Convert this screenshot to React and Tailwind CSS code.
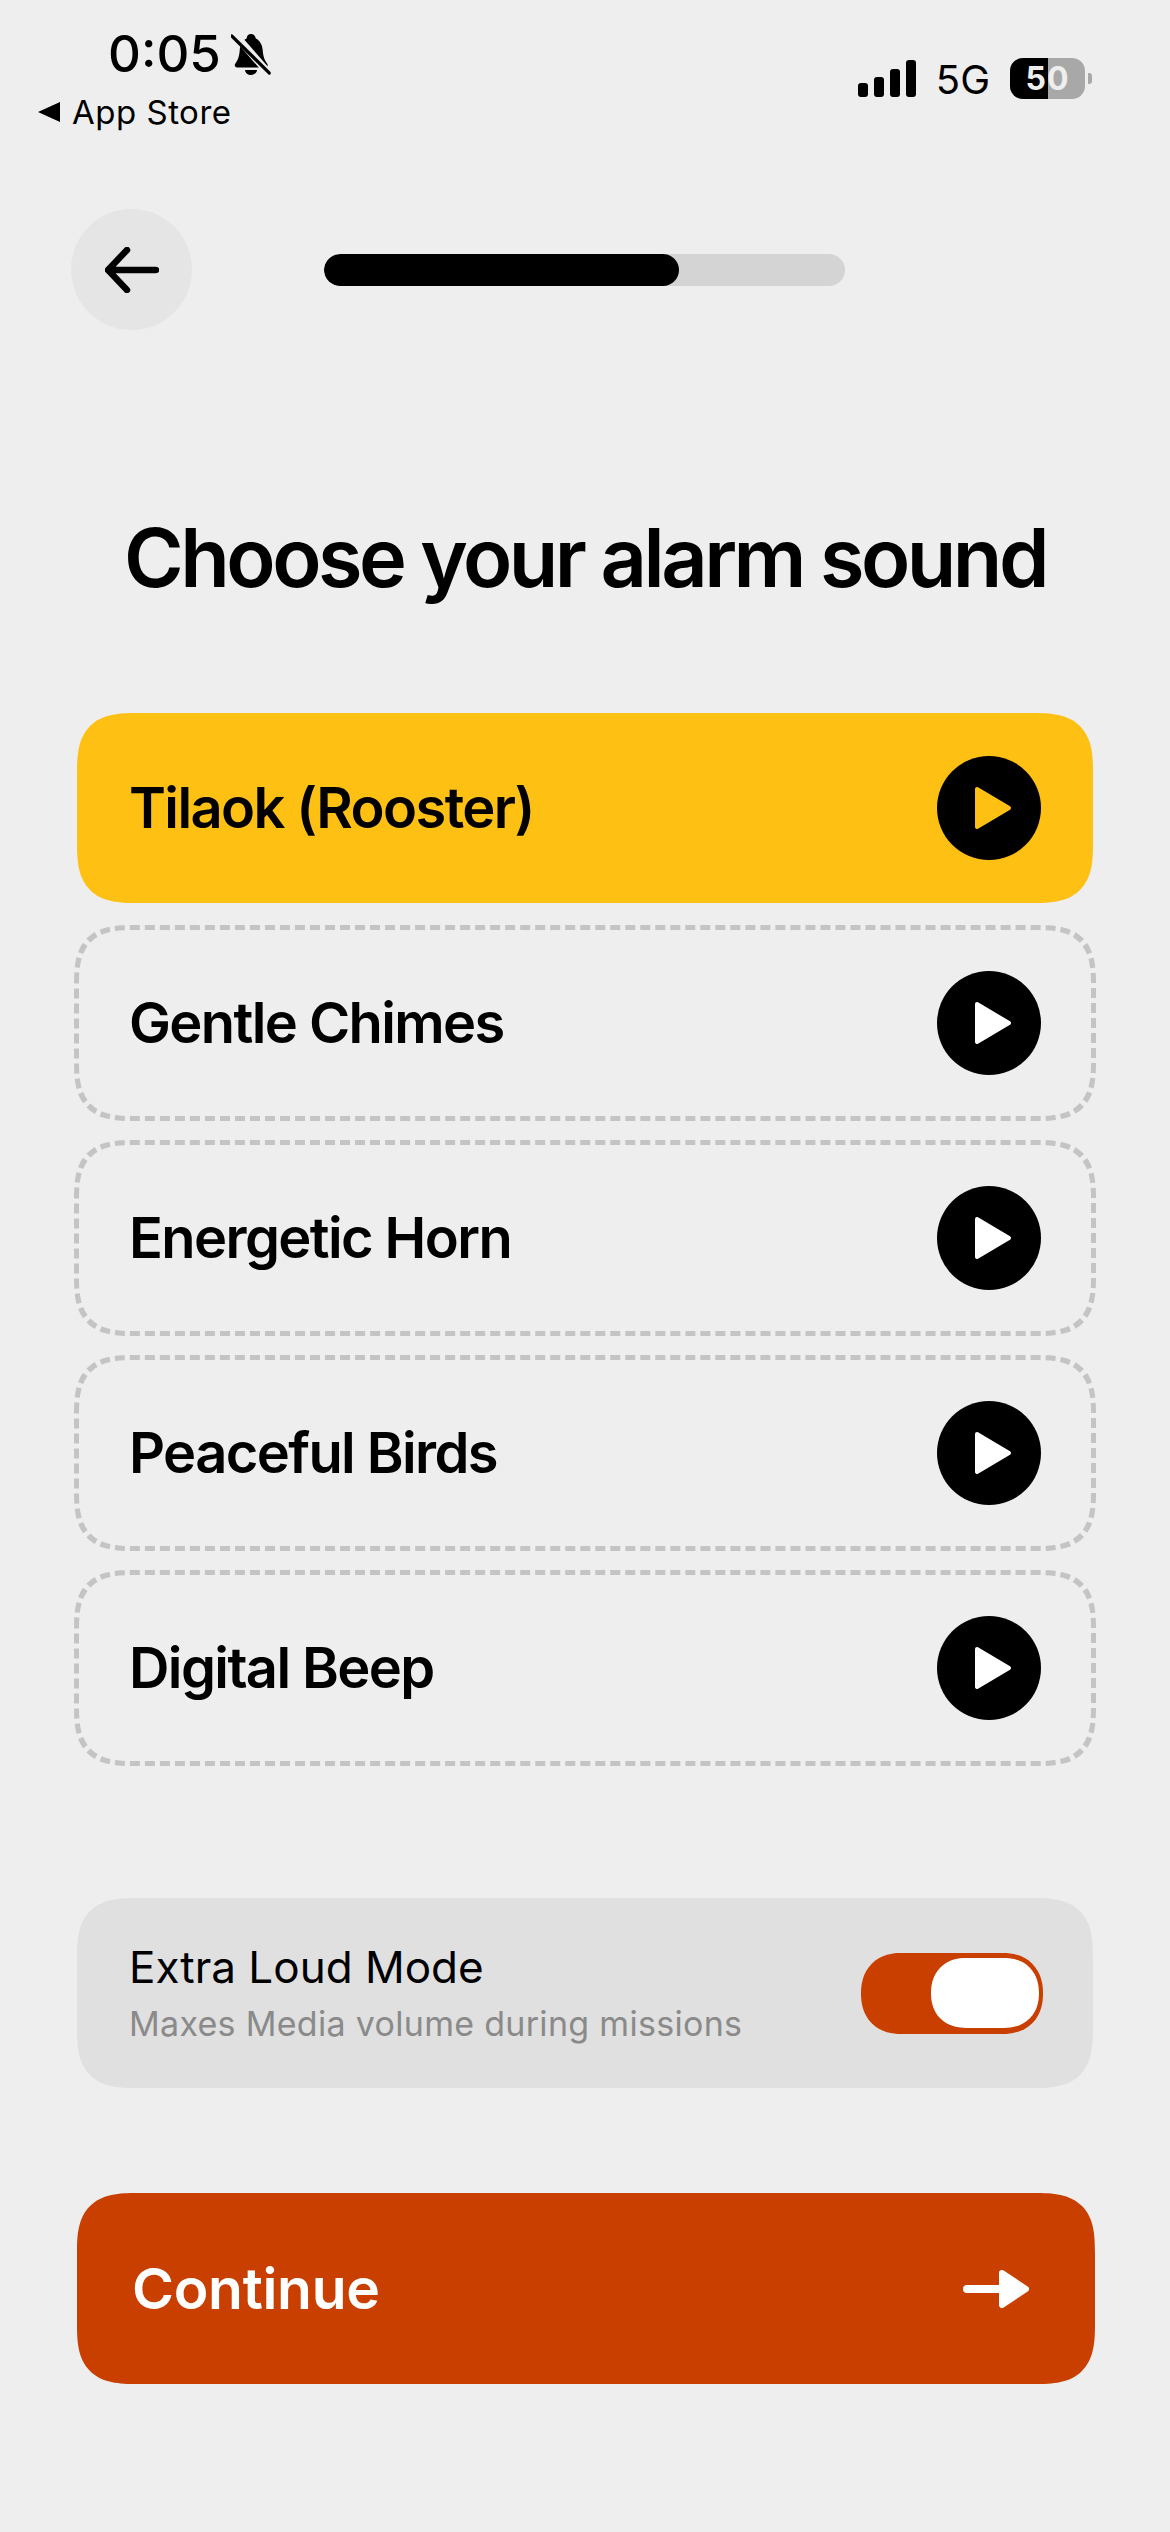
const font = { fontFamily: "Inter, 'Liberation Sans', sans-serif" };

const SOUNDS = ["Tilaok (Rooster)", "Gentle Chimes", "Energetic Horn", "Peaceful Birds", "Digital Beep"];

function BellSlash() {
  return (
    <svg width="40" height="42" viewBox="0 0 46 42" preserveAspectRatio="none">
      <path d="M23 1c3 0 5 2 5.500 4.500 5 2 7.500 6.500 8 12 .5 6 2 9.500 5 13 1.500 2 .5 4-2 4H7c-2.500 0-3.500-2-2-4 3-3.500 4.500-7 5-13 .5-5.500 3-10 8-12C18 3 20 1 23 1z" fill="#000" />
      <path d="M16 37h14c-.5 3-3.500 5-7 5s-6.500-2-7-5z" fill="#000" />
      <path d="M3 0 44 41" stroke="#eeeeee" strokeWidth="8" />
      <path d="M1 3 44 40" stroke="#000" strokeWidth="3.500" strokeLinecap="round" />
    </svg>
  );
}

function StatusBar() {
  return (
    <div className="flex h-[209px] items-start justify-between pl-[38px] pr-[78px]">
      <div className="pt-[26px]">
        <div className="flex items-center pl-[70px] gap-[10px]">
          <span className="text-[51px] leading-[56px] font-medium text-black">0:05</span>
          <BellSlash />
        </div>
        <div className="flex items-center gap-[12px] mt-[10px]">
          <span className="w-0 h-0 border-y-[10px] border-y-transparent border-r-[22px] border-r-black" />
          <span className="text-[33px] leading-[40px] font-normal text-black tracking-[0.5px]">App Store</span>
        </div>
      </div>
      <div className="flex items-center pt-[57px]">
        <div className="flex items-end gap-[6px] h-[37px]">
          <span className="w-[10px] h-[14px] rounded-[3px] bg-black" />
          <span className="w-[10px] h-[20px] rounded-[3px] bg-black" />
          <span className="w-[10px] h-[28px] rounded-[3px] bg-black" />
          <span className="w-[10px] h-[37px] rounded-[3px] bg-black" />
        </div>
        <span className="ml-[20px] text-[40px] leading-[41px] font-normal text-black pt-[2px]">5G</span>
        <div className="relative ml-[20px] flex h-[41px] w-[75px] overflow-hidden rounded-[13px] bg-[#a8a8a8]">
          <span className="w-[38px] bg-black" />
          <span className="absolute inset-0 flex items-center justify-center text-[32px] font-bold text-[#eeeeee] tracking-[1px]">50</span>
        </div>
        <span className="ml-[3px] h-[11px] w-[4px] rounded-r-[3px] bg-[#a8a8a8]" />
      </div>
    </div>
  );
}

function SoundRow({ name, active }) {
  return (
    <div
      className={
        "flex items-center justify-between rounded-[60px] [corner-shape:superellipse(1.5)] " +
        (active
          ? "mx-[3px] my-[3px] h-[190px] bg-[#ffc014] pl-[52px] pr-[52px]"
          : "h-[196px] border-[5px] border-dashed border-[#c4c4c4] pl-[50px] pr-[50px]")
      }
    >
      <span className="text-[56px] font-semibold tracking-[-1.600px] text-black">{name}</span>
      <div className="flex h-[104px] w-[104px] items-center justify-center rounded-full bg-black">
        <svg width="38" height="44" viewBox="0 0 38 44" className="ml-[7px]">
          <path d="M3 3 35 22 3 41z" fill={active ? "#ffc014" : "#ffffff"} stroke={active ? "#ffc014" : "#ffffff"} strokeWidth="4" strokeLinejoin="round" />
        </svg>
      </div>
    </div>
  );
}

export default function App() {
  return (
    <div className="min-h-screen bg-[#eeeeee]" style={font}>
      <StatusBar />
      <div className="px-[74px]">
        <div className="flex items-center -ml-[3px]">
          <button className="flex h-[121px] w-[121px] items-center justify-center rounded-full bg-[#e5e5e5]">
            <svg width="54" height="46" viewBox="0 0 54 46" fill="none" stroke="#000" strokeWidth="6.500" strokeLinecap="round" strokeLinejoin="round">
              <path d="M51 23H4M22 3 3 23l19 20" />
            </svg>
          </button>
          <div className="ml-[132px] h-[32px] w-[521px] overflow-hidden rounded-full bg-[#d4d4d4]">
            <div className="h-full w-[355px] rounded-full bg-black" />
          </div>
        </div>
        <h1 className="mt-[178px] text-center text-[81px] leading-[100px] font-semibold tracking-[-3.500px] text-black">Choose your alarm sound</h1>
        <div className="mt-[102px] flex flex-col gap-[19px]">
          {SOUNDS.map((s, i) => (
            <SoundRow key={s} name={s} active={i === 0} />
          ))}
        </div>
        <div className="mx-[3px] mt-[132px] flex h-[190px] items-center justify-between rounded-[60px] [corner-shape:superellipse(1.5)] bg-[#e0e0e0] pl-[52px] pr-[50px]">
          <div>
            <div className="text-[44px] leading-[54px] font-normal text-black">Extra Loud Mode</div>
            <div className="mt-[8px] text-[34px] leading-[44px] font-normal tracking-[0.3px] text-[#8a8a8a]">Maxes Media volume during missions</div>
          </div>
          <div className="flex h-[81px] w-[182px] items-center justify-end rounded-[40px] [corner-shape:superellipse(1.15)] bg-[#c93f00] pr-[4px]">
            <span className="h-[70px] w-[108px] rounded-[35px] [corner-shape:superellipse(1.15)] bg-white" />
          </div>
        </div>
        <button className="mx-[3px] mt-[105px] flex h-[191px] w-[1018px] items-center justify-between rounded-[60px] [corner-shape:superellipse(1.5)] bg-[#c93f00] pl-[55px] pr-[65px]">
          <span className="text-[57px] font-semibold tracking-[-0.300px] text-white">Continue</span>
          <svg width="68" height="40" viewBox="0 0 68 40">
            <path d="M5 20h34" stroke="#fff" strokeWidth="8" strokeLinecap="round" />
            <path d="M40 4 64 20 40 36z" fill="#fff" stroke="#fff" strokeWidth="6" strokeLinejoin="round" />
          </svg>
        </button>
      </div>
    </div>
  );
}
